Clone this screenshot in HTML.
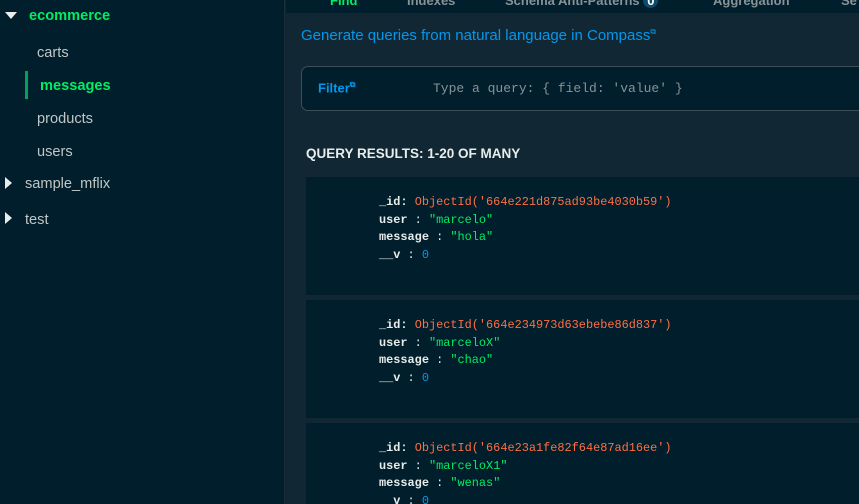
<!DOCTYPE html>
<html><head><style>
*{margin:0;padding:0;box-sizing:border-box}
html,body{width:859px;height:504px;overflow:hidden}
body{background:#112733;font-family:"Liberation Sans",sans-serif;position:relative}
.side{position:absolute;left:0;top:0;width:285px;height:504px;background:#001e2b;border-right:1px solid #1c2d38}
.t{position:absolute;font-size:14.6px;color:#c1c7c6}
.g{color:#00ed64;font-weight:bold}
.tri-d{position:absolute;left:5px;top:12px;width:0;height:0;border-left:6px solid transparent;border-right:6px solid transparent;border-top:7px solid #e8edeb}
.tri-r{position:absolute;left:5px;width:0;height:0;border-top:6px solid transparent;border-bottom:6px solid transparent;border-left:7px solid #e8edeb}
.bar{position:absolute;left:25px;top:71px;width:3px;height:28px;background:#00a35c}
.tabs{position:absolute;left:286px;top:0;width:573px;height:13px;background:#001e2b;overflow:hidden}
.tab{position:absolute;top:-7px;font-size:13px;font-weight:bold;color:#889397}
.link{position:absolute;left:301px;top:27px;font-size:15px;color:#0498ec}
.filter{position:absolute;left:301px;top:66px;width:570px;height:45px;background:#001e2b;border:1px solid #3d4f58;border-radius:7px}
.mono{font-family:"Liberation Mono",monospace}
.qr{position:absolute;left:306px;top:146px;font-size:13.5px;font-weight:bold;color:#e8edeb}
.card{position:absolute;left:306px;width:560px;height:118px;background:#001e2b;overflow:hidden}
.doc{position:absolute;left:73px;top:17px;font-family:"Liberation Mono",monospace;font-size:11.9px;line-height:17.5px;color:#e8edeb;white-space:pre}
.k{font-weight:bold}.r{color:#ff6f44}.s{color:#00ed64}.n{color:#0498ec}
</style></head><body>
<div class="side">
<div class="tri-d"></div>
<div class="t g" style="left:29px;top:8px">ecommerce</div>
<div class="t" style="left:37px;top:45px">carts</div>
<div class="bar"></div>
<div class="t g" style="left:40px;top:78px">messages</div>
<div class="t" style="left:37px;top:111px">products</div>
<div class="t" style="left:37px;top:144px">users</div>
<div class="tri-r" style="top:177px"></div>
<div class="t" style="left:25px;top:176px">sample_mflix</div>
<div class="tri-r" style="top:212px"></div>
<div class="t" style="left:25px;top:212px">test</div>
</div>
<div class="tabs">
<div class="tab" style="left:44px;color:#00ed64">Find</div>
<div class="tab" style="left:121px">Indexes</div>
<div class="tab" style="left:219px">Schema Anti-Patterns <span style="display:inline-block;background:#0c4a6e;color:#fff;border-radius:8px;padding:0 4px">0</span></div>
<div class="tab" style="left:427px">Aggregation</div>
<div class="tab" style="left:555px">Se</div>
</div>
<div class="link">Generate queries from natural language in Compass<sup style="font-size:8px">&#x29C9;</sup></div>
<div class="filter">
<div style="position:absolute;left:16px;top:13px;font-size:13px;font-weight:bold;color:#0498ec">Filter<sup style="font-size:8px">&#x29C9;</sup></div>
<div class="mono" style="position:absolute;left:131px;top:14px;font-size:13px;color:#889397">Type a query: { field: 'value' }</div>
</div>
<div class="qr">QUERY RESULTS: 1-20 OF MANY</div>
<div class="card" style="top:177px"><div class="doc"><span class="k">_id:</span> <span class="r">ObjectId('664e221d875ad93be4030b59')</span>
<span class="k">user</span> : <span class="s">"marcelo"</span>
<span class="k">message</span> : <span class="s">"hola"</span>
<span class="k">__v</span> : <span class="n">0</span></div></div>
<div class="card" style="top:300px"><div class="doc"><span class="k">_id:</span> <span class="r">ObjectId('664e234973d63ebebe86d837')</span>
<span class="k">user</span> : <span class="s">"marceloX"</span>
<span class="k">message</span> : <span class="s">"chao"</span>
<span class="k">__v</span> : <span class="n">0</span></div></div>
<div class="card" style="top:423px;height:81px"><div class="doc"><span class="k">_id:</span> <span class="r">ObjectId('664e23a1fe82f64e87ad16ee')</span>
<span class="k">user</span> : <span class="s">"marceloX1"</span>
<span class="k">message</span> : <span class="s">"wenas"</span>
<span class="k">__v</span> : <span class="n">0</span></div></div>
</body></html>
